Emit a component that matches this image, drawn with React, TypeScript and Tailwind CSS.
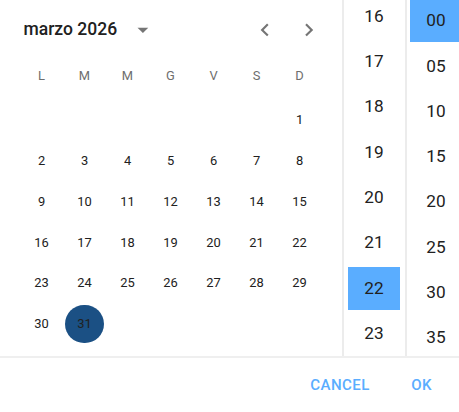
import React from "react";

const weekdays = ["L", "M", "M", "G", "V", "S", "D"];
const weeks: (number | null)[][] = [
  [null, null, null, null, null, null, 1],
  [2, 3, 4, 5, 6, 7, 8],
  [9, 10, 11, 12, 13, 14, 15],
  [16, 17, 18, 19, 20, 21, 22],
  [23, 24, 25, 26, 27, 28, 29],
  [30, 31, null, null, null, null, null],
];

function TimeColumn({
  items,
  selected,
  offset,
  ml,
}: {
  items: string[];
  selected: string;
  offset: string;
  ml: string;
}) {
  return (
    <div className="w-[60px] shrink-0 overflow-hidden h-full">
      <div className={`flex flex-col gap-[3px] ${offset}`}>
        {items.map((it) => (
          <div
            key={it}
            className={`${ml} w-[52px] h-[42.3px] shrink-0 flex items-center justify-center text-[17.2px] text-[#212121] ${
              it === selected ? "bg-[#5aadff]" : ""
            }`}
          >
            {it}
          </div>
        ))}
      </div>
    </div>
  );
}

export default function App() {
  return (
    <div
      className="w-[459px] h-[412px] overflow-hidden bg-white flex flex-col"
      style={{ fontFamily: "Roboto, 'Liberation Sans', sans-serif" }}
    >
      <div className="flex h-[356px] shrink-0">
        {/* calendar */}
        <div className="w-[342px] shrink-0 flex flex-col">
          <div className="h-[46px] pt-[13px] flex items-center shrink-0">
            <div className="h-[33px] w-full flex items-center">
              <span className="pl-[23.5px] w-[129.6px] shrink-0 text-[17.5px] font-medium text-[#212121] whitespace-nowrap">
                marzo 2026
              </span>
              <svg viewBox="0 0 24 24" className="w-[25.8px] h-[25.8px] shrink-0" fill="#757575">
                <path d="M7 10l5 5 5-5z" />
              </svg>
              <div className="ml-auto flex items-center gap-[17.6px] pr-[20.4px]">
                <svg viewBox="0 0 24 24" className="w-[25.8px] h-[25.8px]" fill="#757575">
                  <path d="M15.41 16.59L10.83 12l4.58-4.59L14 6l-6 6 6 6 1.41-1.41z" />
                </svg>
                <svg viewBox="0 0 24 24" className="w-[25.8px] h-[25.8px]" fill="#757575">
                  <path d="M8.59 16.59L13.17 12 8.59 7.41 10 6l6 6-6 6-1.41-1.41z" />
                </svg>
              </div>
            </div>
          </div>
          <div className="mt-[10px] h-[40px] pl-[20px] flex items-center shrink-0">
            {weekdays.map((d, i) => (
              <div
                key={i}
                className="w-[43px] text-center text-[12.9px] text-[#6e6e6e]"
              >
                {d}
              </div>
            ))}
          </div>
          <div className="mt-[4.5px] pl-[20px] flex flex-col gap-[2.15px]">
            {weeks.map((w, wi) => (
              <div key={wi} className="flex h-[38.7px]">
                {w.map((d, di) => (
                  <div key={di} className="w-[43px] flex items-center justify-center">
                    {d !== null && (
                      <div
                        className={`w-[38.7px] h-[38.7px] rounded-full flex items-center justify-center text-[12.9px] text-[#212121] ${
                          d === 31 ? "bg-[#1b5084]" : ""
                        }`}
                      >
                        {d}
                      </div>
                    )}
                  </div>
                ))}
              </div>
            ))}
          </div>
        </div>
        <div className="w-[2px] shrink-0 bg-[#ececec]" />
        <div className="w-[61px] shrink-0 overflow-hidden">
          <TimeColumn
            items={["16", "17", "18", "19", "20", "21", "22", "23"]}
            selected="22"
            offset="-mt-[4.5px]"
            ml="ml-[4px]"
          />
        </div>
        <div className="w-[2px] shrink-0 bg-[#ececec]" />
        <TimeColumn
          items={["00", "05", "10", "15", "20", "25", "30", "35"]}
          selected="00"
          offset="mt-0"
          ml="ml-[3px]"
        />
      </div>
      <div className="h-[2px] shrink-0 bg-[#efefef]" />
      <div className="h-[54px] flex items-center justify-end pr-[2.8px] gap-[7.2px]">
        <div className="w-[80px] text-center text-[15.05px] font-medium tracking-[0.02857em] text-[#5aadff]">
          CANCEL
        </div>
        <div className="w-[69px] text-center text-[15.05px] font-medium tracking-[0.02857em] text-[#5aadff]">
          OK
        </div>
      </div>
    </div>
  );
}
